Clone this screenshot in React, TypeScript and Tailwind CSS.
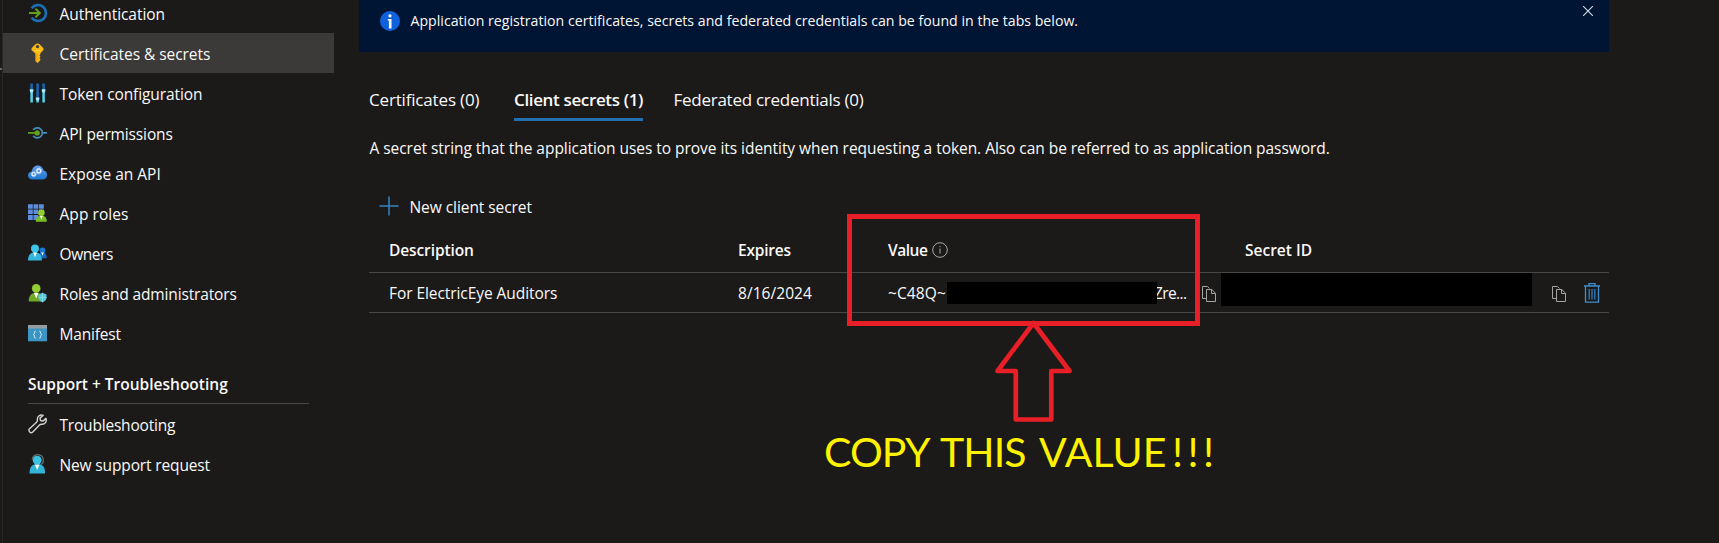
import type { ReactNode } from 'react'

function AuthenticationIcon() {
  return (
    <svg viewBox="0 0 20 20" className="h-5 w-5">
      <path d="M3.6 5.2A8 8 0 1 1 3.6 14.8" fill="none" stroke="#1a6fb5" strokeWidth="2.7" />
      <path d="M1 10h10M7.4 5.8l4.4 4.2-4.4 4.2" fill="none" stroke="#63a020" strokeWidth="2" />
    </svg>
  )
}

function KeyIcon() {
  return (
    <svg viewBox="0 0 20 20" className="h-5 w-5">
      <path
        d="M7.2 1.6 Q9.5-.4 11.8 1.6L15 4.8Q16.2 6.2 15 7.6L12.3 10.4V11.5l-.9.9.9.9v.8l-.9.9.9 1v1.2L9.9 19.8Q9.4 20.1 9 19.6L7.4 18V10.6L4 7.6Q2.8 6.2 4 4.8Z"
        fill="#fcb913"
      />
      <path d="M8.8 10.8v7" stroke="#e39300" strokeWidth=".8" />
      <path d="M6.8 7.6h5.6" stroke="#ffd95a" strokeWidth="1" />
      <circle cx="9.5" cy="3.6" r="1.6" fill="#3b3a39" />
    </svg>
  )
}

function TokenIcon() {
  return (
    <svg viewBox="0 0 20 20" className="h-5 w-5">
      <path d="M3.6.5v7M9.6.5v15M15.6.5v7" stroke="#1668b5" strokeWidth="2.5" />
      <path d="M3.6 7.5v12M15.6 7.5v12M9.6 16.5v3" stroke="#50d5ee" strokeWidth="2.5" />
      <path d="M1.8 6.2h3.6v2l-1 1.2H2.8l-1-1.2ZM13.8 6.2h3.6v2l-1 1.2h-1.6l-1-1.2ZM7.8 14.6h3.6v1.6l-1 1.4H8.8l-1-1.4Z" fill="#b4edf8" />
    </svg>
  )
}

function ApiPermissionsIcon() {
  return (
    <svg viewBox="0 0 20 20" className="h-5 w-5">
      <path d="M5.2 7.1a5 5 0 1 1 0 5.6M14.5 9.9H19" fill="none" stroke="#4290bd" strokeWidth="1.7" />
      <path d="M0 9.9h8" stroke="#5d9b21" strokeWidth="1.8" />
      <circle cx="9.2" cy="9.9" r="2.6" fill="#65a31e" />
    </svg>
  )
}

function CloudIcon() {
  return (
    <svg viewBox="0 0 20 20" className="h-5 w-5">
      <defs>
        <linearGradient id="cloud" x2="0" y2="1">
          <stop offset="0" stopColor="#6a9de8" />
          <stop offset="1" stopColor="#1b78d0" />
        </linearGradient>
      </defs>
      <path d="M4.4 16.6C1.6 16.6 0 14.8 0 12.6c0-2 1.5-3.7 3.6-4C4.2 4.9 6.5 2.4 9.7 2.4c3.1 0 5.3 2 5.9 5.1 2.1.2 3.5 2 3.5 4.3 0 2.8-1.9 4.8-4.5 4.8Z" fill="url(#cloud)" />
      <circle cx="5.7" cy="11.2" r="1.7" fill="#5b97e0" stroke="#e3f1ff" strokeWidth="1.2" />
      <circle cx="5.7" cy="11.2" r="2.5" fill="none" stroke="#d5e9ff" strokeWidth=".8" strokeDasharray="1 1" />
      <circle cx="10.8" cy="7.9" r="1.9" fill="#5b97e0" stroke="#e3f1ff" strokeWidth="1.3" />
      <circle cx="10.8" cy="7.9" r="2.8" fill="none" stroke="#d5e9ff" strokeWidth=".8" strokeDasharray="1.1 1.1" />
    </svg>
  )
}

function AppRolesIcon() {
  return (
    <svg viewBox="0 0 20 20" className="h-5 w-5">
      <path d="M0 1.3h4.8v4.5H0ZM5.5 1.3h4.8v4.5H5.5ZM11 1.3h4.8v4.5H11ZM0 6.6h4.8v4.5H0ZM5.5 6.6h4.8v4.5H5.5ZM11 6.6h4.8v4.5H11ZM0 11.9h4.8v5H0ZM5.5 11.9h4.8v5H5.5Z" fill="#5b8ddb" />
      <path d="M7.8 18.7c0-4 1.8-6.2 5.5-6.2s5.5 2.2 5.5 6.2Z" fill="#79bd25" />
      <path d="M11.8 12.6h3.2l-1.6 4Z" fill="#fff" />
      <circle cx="13.4" cy="9.7" r="3.3" fill="#90cf32" />
    </svg>
  )
}

function OwnersIcon() {
  return (
    <svg viewBox="0 0 20 20" className="h-5 w-5">
      <path d="M10 15.2c0-4 1.5-6 4.4-6s4.3 2 4.3 6Z" fill="#1768bd" />
      <circle cx="14.5" cy="7.4" r="2.9" fill="#1a78d0" />
      <path d="M13.2 9.4h2.6l-1.3 3.3Z" fill="#fff" />
      <path d="M0 17.6C0 12 2.3 9.2 7 9.2s6.9 2.8 6.9 8.4Z" fill="#36b5dc" />
      <path d="M5 9.3h4l-2 5Z" fill="#fff" />
      <circle cx="7" cy="5.6" r="4" fill="#3bc5e8" />
    </svg>
  )
}

function RolesIcon() {
  return (
    <svg viewBox="0 0 20 20" className="h-5 w-5">
      <path d="M.7 18.6C.7 12.6 3 9.8 8.2 9.8s7.5 2.8 7.5 8.8Z" fill="#6fa822" />
      <path d="M5.9 9.8h4.6l-2.3 5.6Z" fill="#fff" />
      <circle cx="8.2" cy="5.4" r="4.3" fill="#93cf34" />
      <path d="M10.6 11.5l3.9-1.7 4 1.7v3.5c0 2-1.7 3.3-4 4.3-2.3-1-3.9-2.3-3.9-4.3Z" fill="#56c5de" />
      <path d="M14.5 9.8v9.5M10.6 14.5h7.9" stroke="#8de3f0" strokeWidth=".7" />
    </svg>
  )
}

function ManifestIcon() {
  return (
    <svg viewBox="0 0 20 20" className="h-5 w-5">
      <path d="M0 2h19v16.3H0Z" fill="#3c96c3" />
      <path d="M0 2h19v3.5H0Z" fill="#959da3" />
      <path d="M7.7 8.2c-1.4 0-1.3.7-1.3 1.7 0 1-.1 1.5-1.2 1.7 1.1.2 1.2.8 1.2 1.7 0 1-.1 1.8 1.3 1.8M11.3 8.2c1.4 0 1.3.7 1.3 1.7 0 1 .1 1.5 1.2 1.7-1.1.2-1.2.8-1.2 1.7 0 1 .1 1.8-1.3 1.8" fill="none" stroke="#d8f3ff" strokeWidth="1" />
    </svg>
  )
}

function WrenchIcon() {
  return (
    <svg viewBox="0 0 20 20" className="h-5 w-5">
      <path
        d="M18 4.4l-3.1 2.7-2.4-.6-.5-2.4 3.2-2.8C12.3.2 8.9 2.1 9.4 5.9 9.5 7 9.2 7.7 8.3 8.5L1.5 14.7c-1.7 2.4 1.2 5.1 3.3 3.3L11.5 11c.8-.8 1.3-.9 2.3-.8 3.2.2 5.2-2.4 4.2-5.8Z"
        fill="none"
        stroke="#d4d4d4"
        strokeWidth="1.4"
        strokeLinejoin="round"
      />
    </svg>
  )
}

function SupportIcon() {
  return (
    <svg viewBox="0 0 20 20" className="h-5 w-5">
      <path d="M4.3 5.6C4.5-1 15.2-1.2 15.4 6.5c0 2-.8 3.6-2.8 3.9" fill="none" stroke="#626c70" strokeWidth="1.3" />
      <path d="M1.5 19.4C1.5 13 4 10 9.3 10s7.8 3 7.8 9.4Z" fill="#33b4d6" />
      <path d="M6.9 10.4h4.6L9.2 16Z" fill="#fff" />
      <circle cx="9.2" cy="6.2" r="4.4" fill="#38c3e4" />
    </svg>
  )
}

function CopyIcon() {
  return (
    <svg viewBox="0 0 14 16" className="mt-[3px] h-4 w-3.5">
      <path d="M4.5 12.5H.5V.5h5l2 2M4.5 3.5h5.3l3.7 3.7v8.300h-9ZM9.5 3.5v4h4" fill="none" stroke="#a5a4a3" strokeWidth="1" />
    </svg>
  )
}

function TrashIcon() {
  return (
    <svg viewBox="0 0 16 20" className="mt-px h-5 w-4">
      <path d="M0 3h16M5 3V.7h6V3M1.5 3v16.2h13V3" fill="none" stroke="#3f8fd0" strokeWidth="1.3" />
      <path d="M5.2 6v10.500M8 6v10.500M10.8 6v10.500" stroke="#2f7dbd" strokeWidth="1.3" />
    </svg>
  )
}

function NavItem({ icon, label, active }: { icon: ReactNode; label: ReactNode; active?: boolean }) {
  return (
    <li className={active ? 'flex h-10 items-center bg-[#3b3a39] pl-[25px]' : 'flex h-10 items-center pl-[25px]'}>
      {icon}
      <span className="ml-[11.5px] pt-0.5 leading-[22px]">{label}</span>
    </li>
  )
}

export default function App() {
  return (
    <div className="relative flex h-[543px] w-[1719px] overflow-hidden bg-[#1b1a19] font-['Open_Sans','Noto_Sans',sans-serif] text-[15.5px] whitespace-nowrap text-[#faf9f8]">
      <div className="w-[3px] shrink-0 border-r border-[#292827] pt-[68px]">
        <div className="h-0.5 bg-[#6b6a69]" />
      </div>

      <nav className="w-[331px] shrink-0">
        <ul className="-mt-[7px]">
          <NavItem icon={<AuthenticationIcon />} label={<span className="tracking-[-0.06px]">Authentication</span>} />
          <NavItem active icon={<KeyIcon />} label={<span className="tracking-[-0.045px]">Certificates &amp; secrets</span>} />
          <NavItem icon={<TokenIcon />} label={<span className="tracking-[-0.1px]">Token configuration</span>} />
          <NavItem icon={<ApiPermissionsIcon />} label={<span className="tracking-[-0.13px]">API permissions</span>} />
          <NavItem icon={<CloudIcon />} label="Expose an API" />
          <NavItem icon={<AppRolesIcon />} label={<span className="tracking-[0.05px]">App roles</span>} />
          <NavItem icon={<OwnersIcon />} label={<span className="tracking-[-0.42px]">Owners</span>} />
          <NavItem icon={<RolesIcon />} label={<span className="tracking-[-0.15px]">Roles and administrators</span>} />
          <NavItem icon={<ManifestIcon />} label={<span className="tracking-[-0.18px]">Manifest</span>} />
        </ul>
        <h2 className="mr-[25px] ml-[25px] h-[51px] border-b border-[#484746] pt-[20px] leading-[22px] font-semibold">Support + Troubleshooting</h2>
        <ul>
          <NavItem icon={<WrenchIcon />} label={<span className="tracking-[-0.2px]">Troubleshooting</span>} />
          <NavItem icon={<SupportIcon />} label={<span className="tracking-[-0.14px]">New support request</span>} />
        </ul>
      </nav>

      <main className="ml-[25px] w-[1250px]">
        <div className="flex h-[52px] items-start bg-[#001433] pl-[21px] text-[14.15px]">
          <svg viewBox="0 0 20 20" className="mt-[11px] h-5 w-5">
            <circle cx="10" cy="10" r="10" fill="#0f62dc" />
            <circle cx="10" cy="4.8" r="1.6" fill="#fff" />
            <path d="M7.8 8h3.7v9.5H8.9V9.5H7.8Z" fill="#fff" />
          </svg>
          <p className="ml-[10.5px] pt-[9px] leading-6 tracking-[0.005px]">Application registration certificates, secrets and federated credentials can be found in the tabs below.</p>
          <svg viewBox="0 0 10 10" className="mt-[6px] mr-[16px] ml-auto h-2.5 w-2.5">
            <path d="M0 0l10 10M10 0L0 10" stroke="#d5dbe3" strokeWidth="1.1" />
          </svg>
        </div>

        <div className="pl-[10px]">
          <div className="mt-[36px] flex h-[33px] text-[17px] leading-6">
            <div className="w-[145px] tracking-[-0.17px]">Certificates (0)</div>
            <div className="mr-[30.5px] w-[129px] border-b-[3px] border-[#2270b0] font-semibold tracking-[-0.36px]">Client secrets (1)</div>
            <div className="tracking-[-0.26px]">Federated credentials (0)</div>
          </div>
          <p className="mt-[15px] pl-[0.5px] leading-6 tracking-[-0.045px]">
            A secret string that the application uses to prove its identity when requesting a token. Also can be referred to as application password.
          </p>

          <div className="mt-[35px] flex h-6 items-center pl-[10px]">
            <svg viewBox="0 0 20 20" className="-mt-0.5 h-5 w-5">
              <path d="M10 .5v19M.5 10h19" stroke="#3584c4" strokeWidth="1.5" />
            </svg>
            <span className="ml-[10.5px] leading-6 tracking-[-0.06px]">New client secret</span>
          </div>

          <table className="w-[1240px] table-fixed border-collapse text-left">
            <colgroup>
              <col className="w-[369px]" />
              <col className="w-[150px]" />
              <col className="w-[333px]" />
              <col />
            </colgroup>
            <thead>
              <tr className="h-[53px] border-b border-[#484746]">
                <th className="pt-2.5 pl-[20px] font-semibold tracking-[-0.11px]">Description</th>
                <th className="pt-2.5 font-semibold tracking-[-0.21px]">Expires</th>
                <th className="pt-2.5 font-semibold">
                  <div className="flex items-center">
                    <span className="tracking-[-0.45px]">Value</span>
                    <svg viewBox="0 0 16 16" className="ml-1 h-4 w-4">
                      <circle cx="8" cy="8" r="7.3" fill="none" stroke="#aaa9a8" strokeWidth="1" />
                      <path d="M8 6.5v5M8 4v1.2" stroke="#aaa9a8" strokeWidth="1" />
                    </svg>
                  </div>
                </th>
                <th className="pt-2.5 pl-[24px] font-semibold">Secret ID</th>
              </tr>
            </thead>
            <tbody>
              <tr className="h-10 border-b border-[#484746]">
                <td className="pt-[3px] pl-[20px] tracking-[-0.067px]">For ElectricEye Auditors</td>
                <td className="pt-[3px] tracking-[0.057px]">8/16/2024</td>
                <td className="p-0">
                  <div className="flex h-[39px] items-center">
                    <span className="w-[59px] pt-[3px] tracking-[0.12px]">~C48Q~</span>
                    <span className="z-10 mt-px h-[22px] w-[210px] bg-black" />
                    <span className="-ml-[3px] w-[48px] pt-[3px] tracking-[-0.6px]">Zre...</span>
                    <CopyIcon />
                  </div>
                </td>
                <td className="p-0">
                  <div className="flex h-[39px] items-center">
                    <span className="-mt-[6px] h-[33px] w-[311px] bg-black" />
                    <span className="ml-5">
                      <CopyIcon />
                    </span>
                    <span className="ml-[18px]">
                      <TrashIcon />
                    </span>
                  </div>
                </td>
              </tr>
            </tbody>
          </table>
        </div>
      </main>

      <div className="absolute top-[214px] left-[847px] h-[112px] w-[353px] border-[5px] border-[#e91f27]" />
      <svg viewBox="0 0 80 102" className="absolute top-[320px] left-[993px] h-[102px] w-[80px]">
        <path d="M40.5 3L76.5 51H58.300V99.5H22.800V51H4.5Z" fill="none" stroke="#e91f27" strokeWidth="4.7" strokeLinejoin="round" />
      </svg>
      <div className="absolute top-[427px] left-[824px] flex font-['Lato',sans-serif] text-[41px] leading-[50px] text-[#fff200]">
        <span className="w-[116px] tracking-[-0.9px]">COPY </span>
        <span className="w-[99px] tracking-[-0.9px]">THIS </span>
        <span className="w-[133px] tracking-[0.1px]">VALUE</span>
        <span className="tracking-[4.5px]">!!!</span>
      </div>
    </div>
  )
}
